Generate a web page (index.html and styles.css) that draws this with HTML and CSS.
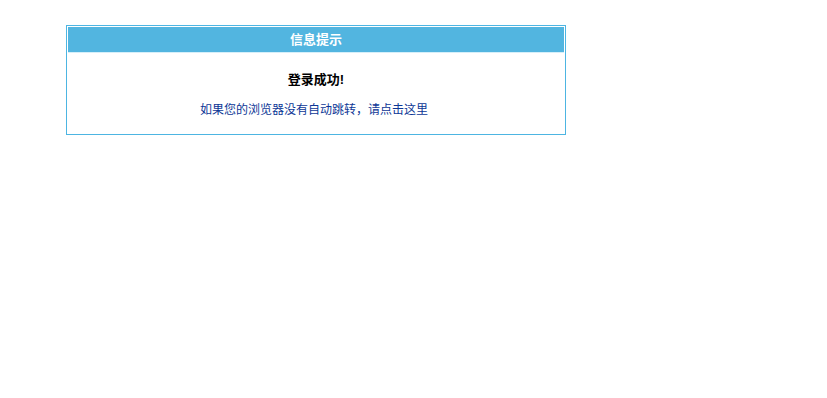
FILE: index.html
```html
<!DOCTYPE html>
<html lang="zh-CN">
<head>
<meta charset="utf-8">
<title>信息提示</title>
<link rel="stylesheet" href="styles.css">
</head>
<body>
<div class="panel">
  <div class="head">信息提示</div>
  <div class="content">
    <div class="title">登录成功!</div>
    <a class="link" href="#">如果您的浏览器没有自动跳转，请点击这里</a>
  </div>
</div>
</body>
</html>
```
FILE: styles.css
```css
html, body {
  background: #ffffff;
}
body {
  margin: 8px;
  font-family: "Liberation Sans", "Noto Sans CJK SC", sans-serif;
  font-size: 12px;
}
.panel {
  width: 496px;
  margin: 17px 0 0 58px;
  border: 1px solid #4db5e2;
  padding: 1px;
}
.head {
  height: 25px;
  line-height: 25px;
  background: #52b5e0;
  color: #ffffff;
  font-weight: bold;
  font-size: 13px;
  text-align: center;
  border-bottom: 1px solid #d6eff9;
}
.content {
  padding: 17px 0 13px;
  text-align: center;
}
.title {
  font-size: 13px;
  font-weight: bold;
  color: #000000;
  line-height: 20px;
  margin-bottom: 10px;
}
.link {
  display: block;
  line-height: 20px;
  color: #0d3796;
  text-decoration: none;
  padding-right: 4px;
}
```
